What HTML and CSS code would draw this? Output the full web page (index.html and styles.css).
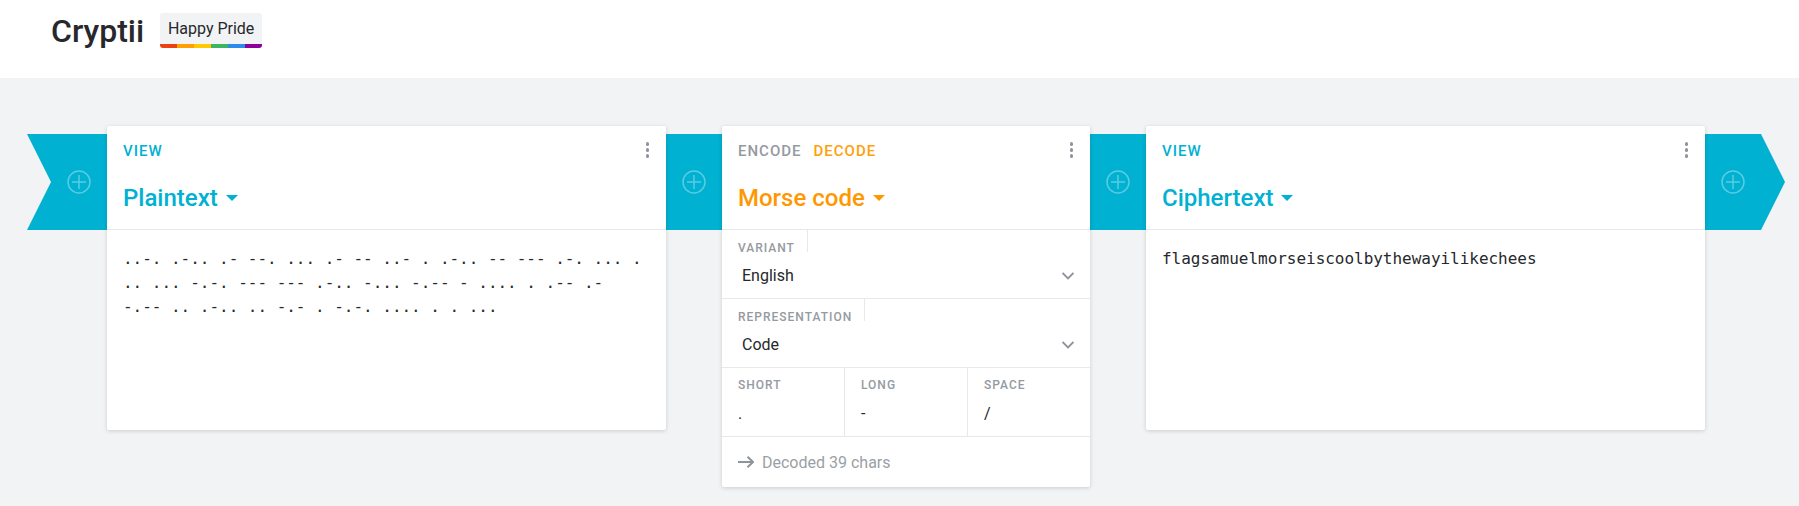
FILE: index.html
```html
<!DOCTYPE html>
<html lang="en">
<head>
    <meta charset="UTF-8">
    <meta name="viewport" content="width=device-width, initial-scale=1.0">
    <title>Cryptii</title>
    <link rel="stylesheet" href="styles.css">
</head>
<body>
    <header class="topbar">
        <h1 class="logo">Cryptii</h1>
        <a class="pride" href="#">
            Happy Pride
            <span class="rainbow"><i class="r1"></i><i class="r2"></i><i class="r3"></i><i class="r4"></i><i class="r5"></i><i class="r6"></i></span>
        </a>
    </header>

    <main class="pipe">
        <div class="bridge bridge-start">
            <svg class="plus" viewBox="0 0 24 24"><circle cx="12" cy="12" r="11"/><path d="M12 5v14M5 12h14"/></svg>
        </div>

        <section class="card card-wide">
            <div class="card-head">
                <div class="tabs"><span class="tab tab-view">View</span></div>
                <div class="title title-view">Plaintext <span class="caret"></span></div>
                <span class="dots"><i></i><i></i><i></i></span>
            </div>
            <div class="content">..-. .-.. .- --. ... .- -- ..- . .-.. -- --- .-. ... .<br>.. ... -.-. --- --- .-.. -... -.-- - .... . .-- .-<br>-.-- .. .-.. .. -.- . -.-. .... . . ...</div>
        </section>

        <div class="bridge">
            <svg class="plus" viewBox="0 0 24 24"><circle cx="12" cy="12" r="11"/><path d="M12 5v14M5 12h14"/></svg>
        </div>

        <section class="card card-morse">
            <div class="card-head">
                <div class="tabs"><span class="tab">Encode</span><span class="tab tab-active">Decode</span></div>
                <div class="title title-brick">Morse code <span class="caret"></span></div>
                <span class="dots"><i></i><i></i><i></i></span>
            </div>
            <div class="field">
                <label class="field-label">Variant</label>
                <div class="select">English <svg class="chevron" viewBox="0 0 12 8"><path d="M.6 1l5.4 5.4L11.4 1"/></svg></div>
            </div>
            <div class="field">
                <label class="field-label">Representation</label>
                <div class="select">Code <svg class="chevron" viewBox="0 0 12 8"><path d="M.6 1l5.4 5.4L11.4 1"/></svg></div>
            </div>
            <div class="field-row">
                <div class="cell"><span class="cell-label">Short</span><span class="cell-value">.</span></div>
                <div class="cell"><span class="cell-label">Long</span><span class="cell-value">-</span></div>
                <div class="cell"><span class="cell-label">Space</span><span class="cell-value">/</span></div>
            </div>
            <div class="status">
                <svg class="arrow" viewBox="0 0 16 12"><path d="M0 6h15M9.5 .8L15 6l-5.5 5.2"/></svg>
                Decoded 39 chars
            </div>
        </section>

        <div class="bridge">
            <svg class="plus" viewBox="0 0 24 24"><circle cx="12" cy="12" r="11"/><path d="M12 5v14M5 12h14"/></svg>
        </div>

        <section class="card card-wide">
            <div class="card-head">
                <div class="tabs"><span class="tab tab-view">View</span></div>
                <div class="title title-view">Ciphertext <span class="caret"></span></div>
                <span class="dots"><i></i><i></i><i></i></span>
            </div>
            <div class="content">flagsamuelmorseiscoolbythewayilikechees</div>
        </section>

        <div class="bridge bridge-end">
            <svg class="plus" viewBox="0 0 24 24"><circle cx="12" cy="12" r="11"/><path d="M12 5v14M5 12h14"/></svg>
        </div>
    </main>
</body>
</html>
```

FILE: styles.css
```css
body {
    margin: 0;
    min-height: 100vh;
    overflow: hidden;
    background: #f2f3f5;
    color: #26282b;
    font-family: Roboto, sans-serif;
    font-size: 16px;
}

/* top bar */
.topbar {
    display: flex;
    align-items: flex-start;
    height: 78px;
    padding: 13px 0 0 51px;
    box-sizing: border-box;
    background: #fff;
}
.logo {
    margin: 0;
    font-size: 32px;
    font-weight: 500;
    line-height: 36px;
    letter-spacing: 0;
}
.pride {
    position: relative;
    display: block;
    width: 102px;
    height: 35px;
    margin-left: 16px;
    border-radius: 3px;
    overflow: hidden;
    background: #f2f3f5;
    color: #26282b;
    font-size: 16px;
    line-height: 32px;
    text-align: center;
    text-decoration: none;
}
.rainbow {
    position: absolute;
    left: 0;
    right: 0;
    bottom: 0;
    display: flex;
    height: 4px;
}
.rainbow i { flex: 1; }
.r1 { background: #ec4213; }
.r2 { background: #ffa000; }
.r3 { background: #ffc800; }
.r4 { background: #3cb563; }
.r5 { background: #2c8cec; }
.r6 { background: #8c009c; }

/* pipeline */
.pipe {
    display: flex;
    align-items: flex-start;
    padding: 48px 0 0 27px;
}
.bridge {
    display: flex;
    align-items: center;
    justify-content: center;
    flex: none;
    width: 56px;
    height: 96px;
    margin-top: 8px;
    background: #00b1d2;
}
.bridge-start {
    width: 80px;
    padding-left: 24px;
    box-sizing: border-box;
    clip-path: polygon(0 0, 100% 0, 100% 100%, 0 100%, 24px 50%);
}
.bridge-end {
    width: 80px;
    padding-right: 24px;
    box-sizing: border-box;
    clip-path: polygon(0 0, 56px 0, 100% 50%, 56px 100%, 0 100%);
}
.plus {
    width: 24px;
    height: 24px;
    fill: none;
    stroke: rgba(255, 255, 255, .35);
    stroke-width: 1.5;
}

/* cards */
.card {
    position: relative;
    z-index: 1;
    flex: none;
    background: #fff;
    border-radius: 2px;
    box-shadow: 0 1px 4px rgba(0, 0, 0, .16);
}
.card-wide {
    width: 559px;
    height: 304px;
}
.card-morse {
    width: 368px;
    height: 361px;
}
.card-head {
    position: relative;
    height: 104px;
    box-sizing: border-box;
    padding: 0 16px;
    border-bottom: 1px solid #e6e8eb;
}
.tabs {
    display: flex;
    gap: 12px;
    padding-top: 16px;
}
.tab {
    color: #959aa1;
    font-size: 15px;
    font-weight: 500;
    line-height: 18px;
    letter-spacing: 1px;
    text-transform: uppercase;
}
.tab-view { color: #00b1d2; }
.tab-active { color: #ff9f0a; }
.title {
    display: flex;
    align-items: center;
    margin-top: 22px;
    font-size: 24px;
    font-weight: 500;
    line-height: 32px;
    white-space: pre;
}
.title-view { color: #00b1d2; }
.title-brick { color: #ff9800; }
.caret {
    width: 0;
    height: 0;
    margin-left: 2px;
    border-left: 6px solid transparent;
    border-right: 6px solid transparent;
    border-top: 6px solid currentColor;
}
.dots {
    position: absolute;
    top: 16px;
    right: 17px;
    display: flex;
    flex-direction: column;
    gap: 2.5px;
}
.dots i {
    width: 3.5px;
    height: 3.5px;
    border-radius: 50%;
    background: #8f949b;
}
.content {
    padding: 17px 16px 0;
    font-family: "DejaVu Sans Mono", monospace;
    font-size: 16px;
    line-height: 24px;
    letter-spacing: -.03px;
    white-space: nowrap;
    color: #26282b;
}

/* settings */
.field {
    height: 69px;
    box-sizing: border-box;
    padding: 0 16px;
    border-bottom: 1px solid #e6e8eb;
}
.field-label {
    position: relative;
    display: block;
    width: max-content;
    margin-left: -16px;
    padding: 10px 13px 0 16px;
    color: #959aa1;
    font-size: 12px;
    font-weight: 500;
    line-height: 16px;
    letter-spacing: 1px;
    text-transform: uppercase;
}
.field-label::after {
    content: "";
    position: absolute;
    top: 0;
    right: 0;
    width: 1px;
    height: 22px;
    background: #e6e8eb;
}
.select {
    display: flex;
    justify-content: space-between;
    align-items: center;
    padding: 8px 0 0 4px;
    color: #26282b;
    line-height: 24px;
}
.chevron {
    width: 12px;
    height: 8px;
    fill: none;
    stroke: #8f949b;
    stroke-width: 1.8;
}
.field-row {
    display: flex;
    height: 69px;
    box-sizing: border-box;
    border-bottom: 1px solid #e6e8eb;
}
.cell {
    flex: 1;
    padding: 8px 16px 0;
    border-left: 1px solid #e6e8eb;
}
.cell:first-child { border-left: 0; }
.cell-label {
    display: block;
    color: #959aa1;
    font-size: 12px;
    font-weight: 500;
    line-height: 18px;
    letter-spacing: 1px;
    text-transform: uppercase;
}
.cell-value {
    display: block;
    margin-top: 8px;
    line-height: 24px;
}
.status {
    display: flex;
    align-items: center;
    gap: 8px;
    height: 50px;
    padding: 0 16px;
    color: #9a9fa6;
}
.arrow {
    width: 16px;
    height: 12px;
    fill: none;
    stroke: #8f949b;
    stroke-width: 2;
}
```
